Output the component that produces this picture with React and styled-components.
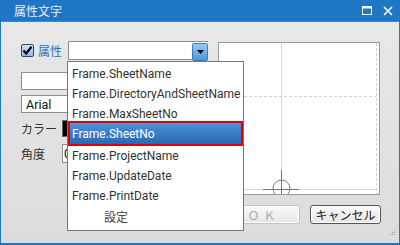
import React from "react";
import styled, { createGlobalStyle } from "styled-components";

const Global = createGlobalStyle`
  html, body { margin: 0; padding: 0; background: #ffffff; }
  body { font-family: Roboto, "Noto Sans CJK JP", sans-serif; }
  * { box-sizing: border-box; }
`;

const Win = styled.div`
  position: relative;
  width: 400px;
  height: 245px;
  display: flex;
  flex-direction: column;
  border-left: 1px solid #1f76c5;
  border-right: 1px solid #1f76c5;
  border-bottom: 2px solid #1f76c5;
  background: linear-gradient(#e9e9e9, #dcdcdc);
  overflow: hidden;
`;

const TitleBar = styled.div`
  height: 22px;
  flex: none;
  background: #1f76c5;
  display: flex;
  align-items: center;
  padding-left: 13px;
  padding-right: 6px;
  color: #e8f0fa;
  font-size: 12px;
  font-family: "Noto Sans CJK JP", sans-serif;
  border-bottom: 1px solid #3b86cf;
`;

const Title = styled.span`
  flex: 1;
  line-height: 22px;
`;

const TitleIcons = styled.div`
  display: flex;
  align-items: center;
  gap: 11px;
`;

const Content = styled.div`
  flex: 1;
  display: flex;
  flex-direction: column;
  padding: 19px 18px 0 20px;
`;

const MainRow = styled.div`
  display: flex;
  gap: 9px;
`;

const LeftCol = styled.div`
  width: 188px;
  display: flex;
  flex-direction: column;
`;

const Row = styled.div`
  display: flex;
  align-items: center;
  height: ${(p) => p.$h || 18}px;
  margin-top: ${(p) => p.$mt || 0}px;
`;

const Check = styled.span`
  width: 13px;
  height: 13px;
  border: 1px solid #2b4a6e;
  border-radius: 2px;
  background: linear-gradient(#cfe3f6, #8fb9e3);
  display: inline-flex;
  align-items: center;
  justify-content: center;
  margin-right: 4px;
`;

const CheckLabel = styled.span`
  color: #2e73c0;
  font-size: 12px;
  font-family: "Noto Sans CJK JP", sans-serif;
  width: 30px;
`;

const Label = styled.span`
  font-size: 12px;
  color: #333;
  font-family: "Noto Sans CJK JP", sans-serif;
  width: 41px;
`;

const Combo = styled.div`
  width: 140px;
  height: 19px;
  display: flex;
  border: 1px solid #8e8e8e;
  border-right: none;
  background: #fff;
`;

const ComboField = styled.div`
  flex: 1;
  background: #fff;
`;

const ComboBtn = styled.div`
  width: 16px;
  height: 18px;
  margin-top: 1px;
  border: 1px solid #3a7cc2;
  border-radius: 2px;
  background: linear-gradient(#9ccaf0, #4d97da);
  display: flex;
  align-items: center;
  justify-content: center;
`;

const Field = styled.div`
  width: ${(p) => p.$w || 187}px;
  height: ${(p) => p.$h || 18}px;
  background: #fff;
  border: 1px solid #8e8e8e;
  font-size: 12.5px;
  color: #111;
  padding-left: ${(p) => p.$pl || 4}px;
  display: flex;
  align-items: center;
`;

const Swatch = styled.div`
  width: 17px;
  height: 17px;
  background: #000;
  border: 1px solid #666;
`;

const Preview = styled.div`
  width: 162px;
  height: 153px;
  margin-top: 1px;
  background: #fff;
  border: 1px solid #9a9a9a;
  display: flex;
`;

const ButtonRow = styled.div`
  display: flex;
  justify-content: flex-end;
  gap: 10px;
  margin-top: 10px;
`;

const Button = styled.div`
  width: ${(p) => p.$w}px;
  height: 19px;
  border-radius: 3px;
  border: 1px solid ${(p) => (p.$disabled ? "#c4c4c4" : "#555")};
  background: linear-gradient(#fafafa, #e6e6e6);
  box-shadow: inset 0 0 0 1px #fff;
  display: flex;
  align-items: center;
  justify-content: center;
  font-size: 12px;
  font-family: "Noto Sans CJK JP", sans-serif;
  color: ${(p) => (p.$disabled ? "#aaa" : "#222")};
  letter-spacing: ${(p) => (p.$disabled ? "4px" : "0")};
`;

const Grip = styled.div`
  position: absolute;
  right: 3px;
  bottom: 3px;
`;

const Popup = styled.div`
  position: absolute;
  left: 66px;
  top: 61px;
  width: 177px;
  height: 170px;
  background: #fff;
  border: 1px solid #777;
  padding: 2px 0 4px 0;
  display: flex;
  flex-direction: column;
  font-family: Roboto, "Noto Sans CJK JP", sans-serif;
  font-size: 12px;
  color: #333;
`;

const Item = styled.div`
  height: 20px;
  flex: none;
  display: flex;
  align-items: center;
  padding-left: ${(p) => p.$indent || 4}px;
  white-space: nowrap;
  font-family: ${(p) => (p.$jp ? '"Noto Sans CJK JP", sans-serif' : "inherit")};
  color: ${(p) => (p.$jp ? "#444" : "inherit")};
`;

const Selected = styled.div`
  height: 25px;
  flex: none;
  margin-top: -3px;
  border: 2px solid #e00000;
  background: linear-gradient(#4b93da, #2a68b0);
  color: #fff;
  display: flex;
  align-items: center;
  padding-left: 2px;
`;

const items1 = ["Frame.SheetName", "Frame.DirectoryAndSheetName", "Frame.MaxSheetNo"];
const items2 = ["Frame.ProjectName", "Frame.UpdateDate", "Frame.PrintDate"];

export default function App() {
  return (
    <>
      <Global />
      <Win>
        <TitleBar>
          <Title>属性文字</Title>
          <TitleIcons>
            <svg width="10" height="9" viewBox="0 0 10 9">
              <rect x="0.5" y="0.5" width="9" height="8" fill="none" stroke="#fff" strokeWidth="1" />
              <rect x="0.5" y="0.5" width="9" height="2" fill="#fff" />
            </svg>
            <svg width="10" height="10" viewBox="0 0 10 10">
              <path d="M1 1 L9 9 M9 1 L1 9" stroke="#fff" strokeWidth="1.6" />
            </svg>
          </TitleIcons>
        </TitleBar>
        <Content>
          <MainRow>
            <LeftCol>
              <Row $h={19}>
                <Check>
                  <svg width="11" height="11" viewBox="0 0 11 11">
                    <path d="M1.5 5.5 L4.2 8.5 L9.5 1.8" fill="none" stroke="#000" strokeWidth="2.2" />
                  </svg>
                </Check>
                <CheckLabel>属性</CheckLabel>
                <Combo>
                  <ComboField />
                  <ComboBtn>
                    <svg width="7" height="4" viewBox="0 0 7 4">
                      <path d="M0 0 L7 0 L3.5 4 Z" fill="#000" />
                    </svg>
                  </ComboBtn>
                </Combo>
              </Row>
              <Row $mt={12}>
                <Field />
              </Row>
              <Row $mt={5}>
                <Field>Arial</Field>
              </Row>
              <Row $mt={7} $h={17}>
                <Label>カラー</Label>
                <Swatch />
              </Row>
              <Row $mt={7} $h={19}>
                <Label>角度</Label>
                <Field $w={60} $h={19} $pl={1}>0</Field>
              </Row>
            </LeftCol>
            <Preview>
              <svg width="160" height="151" viewBox="0 0 160 151">
                <line x1="62.5" y1="0" x2="62.5" y2="151" stroke="#dadada" strokeWidth="1" />
                <line x1="0" y1="53.5" x2="157" y2="53.5" stroke="#d0d0d0" strokeWidth="1" strokeDasharray="3 2" />
                <line x1="157.5" y1="0" x2="157.5" y2="151" stroke="#d0d0d0" strokeWidth="1" strokeDasharray="3 2" />
                <line x1="0" y1="146.5" x2="158" y2="146.5" stroke="#d8d8d8" strokeWidth="1" />
                <line x1="62.5" y1="127" x2="62.5" y2="151" stroke="#777" strokeWidth="1" />
                <line x1="44" y1="146.5" x2="80" y2="146.5" stroke="#777" strokeWidth="1" />
                <circle cx="62.5" cy="145.5" r="8.5" fill="none" stroke="#777" strokeWidth="1" />
              </svg>
            </Preview>
          </MainRow>
          <ButtonRow>
            <Button $w={73} $disabled>ＯＫ</Button>
            <Button $w={71}>キャンセル</Button>
          </ButtonRow>
        </Content>
        <Grip>
          <svg width="6" height="6" viewBox="0 0 6 6">
            <rect x="4" y="0" width="1" height="1" fill="#999" />
            <rect x="2" y="2" width="1" height="1" fill="#999" />
            <rect x="4" y="2" width="1" height="1" fill="#999" />
            <rect x="0" y="4" width="1" height="1" fill="#999" />
            <rect x="2" y="4" width="1" height="1" fill="#999" />
            <rect x="4" y="4" width="1" height="1" fill="#999" />
          </svg>
        </Grip>
        <Popup>
          {items1.map((t) => (
            <Item key={t}>{t}</Item>
          ))}
          <Selected>Frame.SheetNo</Selected>
          {items2.map((t) => (
            <Item key={t}>{t}</Item>
          ))}
          <Item $jp $indent={36}>設定</Item>
        </Popup>
      </Win>
    </>
  );
}
